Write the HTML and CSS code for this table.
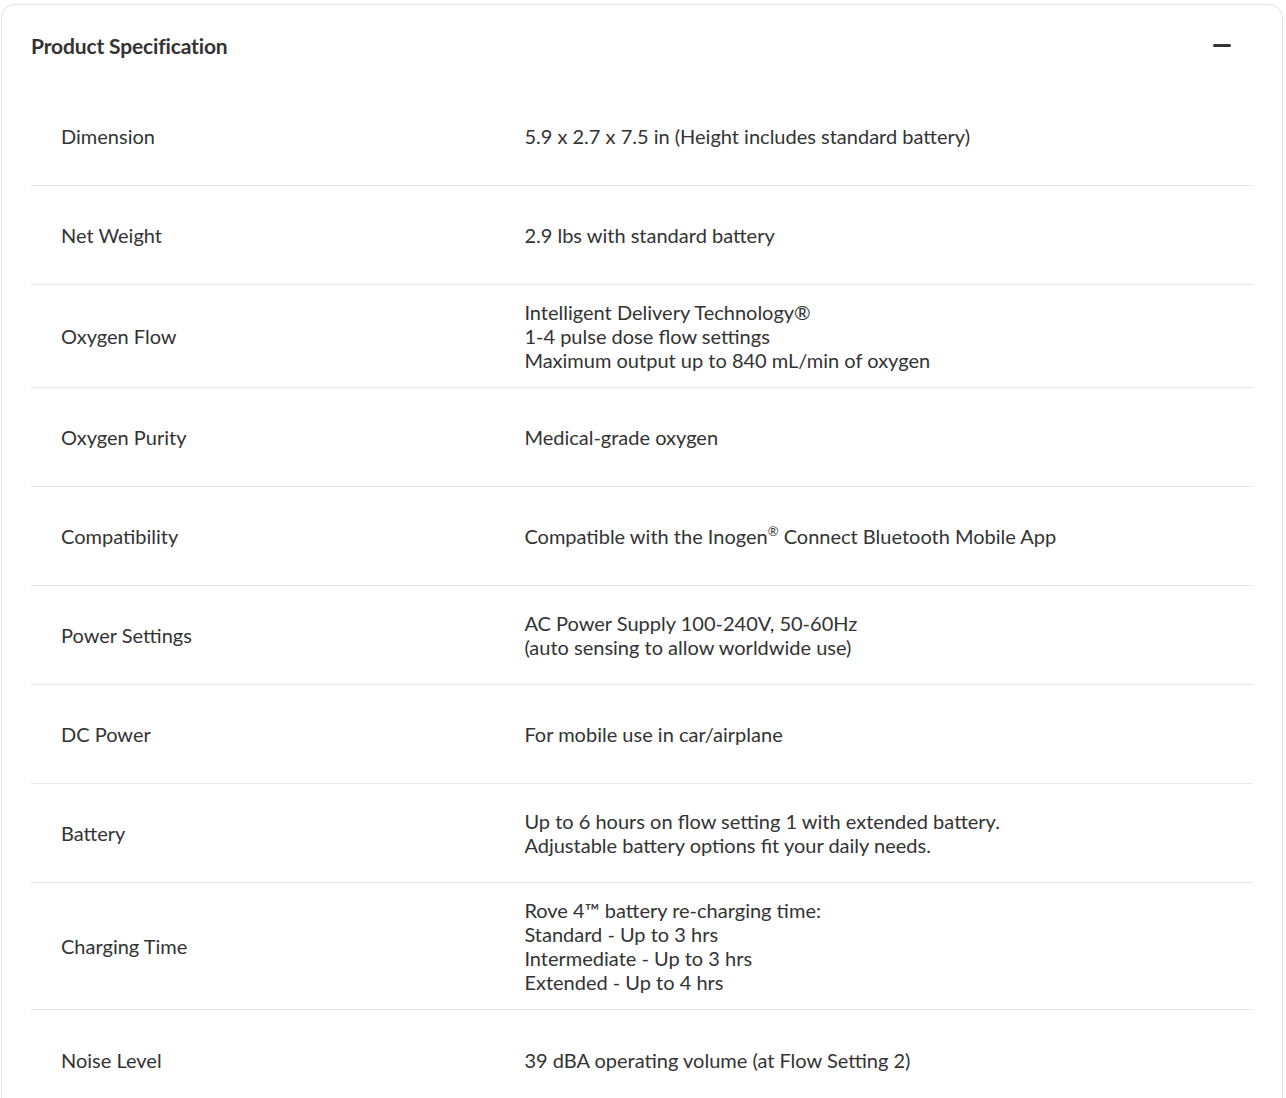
FILE: index.html
```html
<!DOCTYPE html>
<html lang="en">
<head>
<meta charset="utf-8">
<title>Product Specification</title>
<link rel="stylesheet" href="styles.css">
</head>
<body>
<section class="card">
  <header class="card-header">
    <h2 class="card-title">Product Specification</h2>
    <span class="toggle" aria-label="Collapse"></span>
  </header>
  <div class="spec-list">
    <div class="spec-row">
      <div class="spec-label">Dimension</div>
      <div class="spec-value">5.9 x 2.7 x 7.5 in (Height includes standard battery)</div>
    </div>
    <div class="spec-row">
      <div class="spec-label">Net Weight</div>
      <div class="spec-value">2.9 lbs with standard battery</div>
    </div>
    <div class="spec-row">
      <div class="spec-label">Oxygen Flow</div>
      <div class="spec-value">Intelligent Delivery Technology®<br>1-4 pulse dose flow settings<br>Maximum output up to 840 mL/min of oxygen</div>
    </div>
    <div class="spec-row">
      <div class="spec-label">Oxygen Purity</div>
      <div class="spec-value">Medical-grade oxygen</div>
    </div>
    <div class="spec-row">
      <div class="spec-label">Compatibility</div>
      <div class="spec-value">Compatible with the Inogen<sup>®</sup> Connect Bluetooth Mobile App</div>
    </div>
    <div class="spec-row">
      <div class="spec-label">Power Settings</div>
      <div class="spec-value">AC Power Supply 100-240V, 50-60Hz<br>(auto sensing to allow worldwide use)</div>
    </div>
    <div class="spec-row">
      <div class="spec-label">DC Power</div>
      <div class="spec-value">For mobile use in car/airplane</div>
    </div>
    <div class="spec-row">
      <div class="spec-label">Battery</div>
      <div class="spec-value">Up to 6 hours on flow setting 1 with extended battery.<br>Adjustable battery options fit your daily needs.</div>
    </div>
    <div class="spec-row">
      <div class="spec-label">Charging Time</div>
      <div class="spec-value">Rove 4™ battery re-charging time:<br>Standard - Up to 3 hrs<br>Intermediate - Up to 3 hrs<br>Extended - Up to 4 hrs</div>
    </div>
    <div class="spec-row">
      <div class="spec-label">Noise Level</div>
      <div class="spec-value">39 dBA operating volume (at Flow Setting 2)</div>
    </div>
  </div>
</section>
</body>
</html>
```

FILE: styles.css
```css
* { box-sizing: border-box; }
html, body { margin: 0; padding: 0; background: #fff; }
body {
  font-family: Lato, "Liberation Sans", sans-serif;
  color: #333;
}
.card {
  margin: 4px 0 0 1px;
  width: 1282px;
  border: 1px solid #e3e3e3;
  border-radius: 14px;
  padding: 0 30px 30px 29px;
  background: #fff;
}
.card-header {
  height: 82px;
  padding-bottom: 2px;
  display: flex;
  align-items: center;
  justify-content: space-between;
}
.card-title {
  margin: 0;
  font-size: 21px;
  font-weight: 700;
  color: #333;
  letter-spacing: -0.15px;
}
.toggle {
  width: 18px;
  height: 3px;
  border-radius: 2px;
  background: #333;
  margin-right: 21px;
}
.spec-row {
  display: grid;
  grid-template-columns: calc(40% - 1px) 1fr;
  align-items: center;
  min-height: 99px;
  padding: 15px 30px;
  border-bottom: 1px solid #e5e5e5;
  font-size: 20px;
  line-height: 24px;
}
.spec-row:last-child { border-bottom: none; }
.spec-label, .spec-value { color: #333; }
.spec-value sup {
  font-size: 13px;
  line-height: 0;
  vertical-align: 8px;
}
```
